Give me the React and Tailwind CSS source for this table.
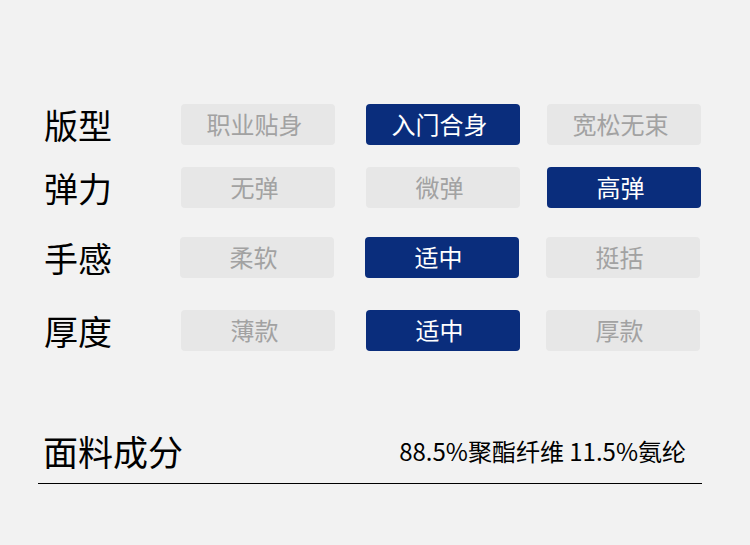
const rows = [
  { label: '版型', opts: ['职业贴身', '入门合身', '宽松无束'], active: 1, mt: 'mt-[104px]' },
  { label: '弹力', opts: ['无弹', '微弹', '高弹'], active: 2, mt: 'mt-[22px]' },
  { label: '手感', opts: ['柔软', '适中', '挺括'], active: 1, mt: 'mt-[29px]', shift: true },
  { label: '厚度', opts: ['薄款', '适中', '厚款'], active: 1, mt: 'mt-[32px]' },
];

function Option({ text, active, className }) {
  return (
    <div
      className={
        'flex h-[41px] w-[154px] items-center justify-center rounded-[4px] pr-[7px] pb-[2px] text-[24px] leading-none ' +
        (active ? 'bg-[#0a2d7c] text-white' : 'bg-[#e7e7e7] text-[#a2a2a2]') +
        ' ' +
        className
      }
    >
      {text}
    </div>
  );
}

export default function App() {
  return (
    <div
      className="h-[545px] w-[750px] overflow-hidden bg-[#f2f2f2] text-black"
      style={{ fontFamily: '"Noto Sans CJK SC", "Noto Sans", sans-serif' }}
    >
      {rows.map((r) => (
        <div key={r.label} className={'flex items-center ' + r.mt}>
          <div className={'text-[34px] leading-none ' + (r.shift ? 'ml-[44px] w-[136px]' : 'ml-[44px] w-[137px]')}>
            {r.label}
          </div>
          <Option text={r.opts[0]} active={r.active === 0} />
          <Option text={r.opts[1]} active={r.active === 1} className="ml-[31px]" />
          <Option text={r.opts[2]} active={r.active === 2} className={r.label === '厚度' ? 'ml-[26px]' : 'ml-[27px]'} />
        </div>
      ))}

      <div className="ml-[38px] mt-[82px] w-[664px] border-b border-black pb-[15px]">
        <div className="flex items-center justify-between">
          <div className="ml-[5px] text-[35px] leading-none">面料成分</div>
          <div className="mr-[16px] text-[24px] leading-none">88.5%聚酯纤维 11.5%氨纶</div>
        </div>
      </div>
    </div>
  );
}
